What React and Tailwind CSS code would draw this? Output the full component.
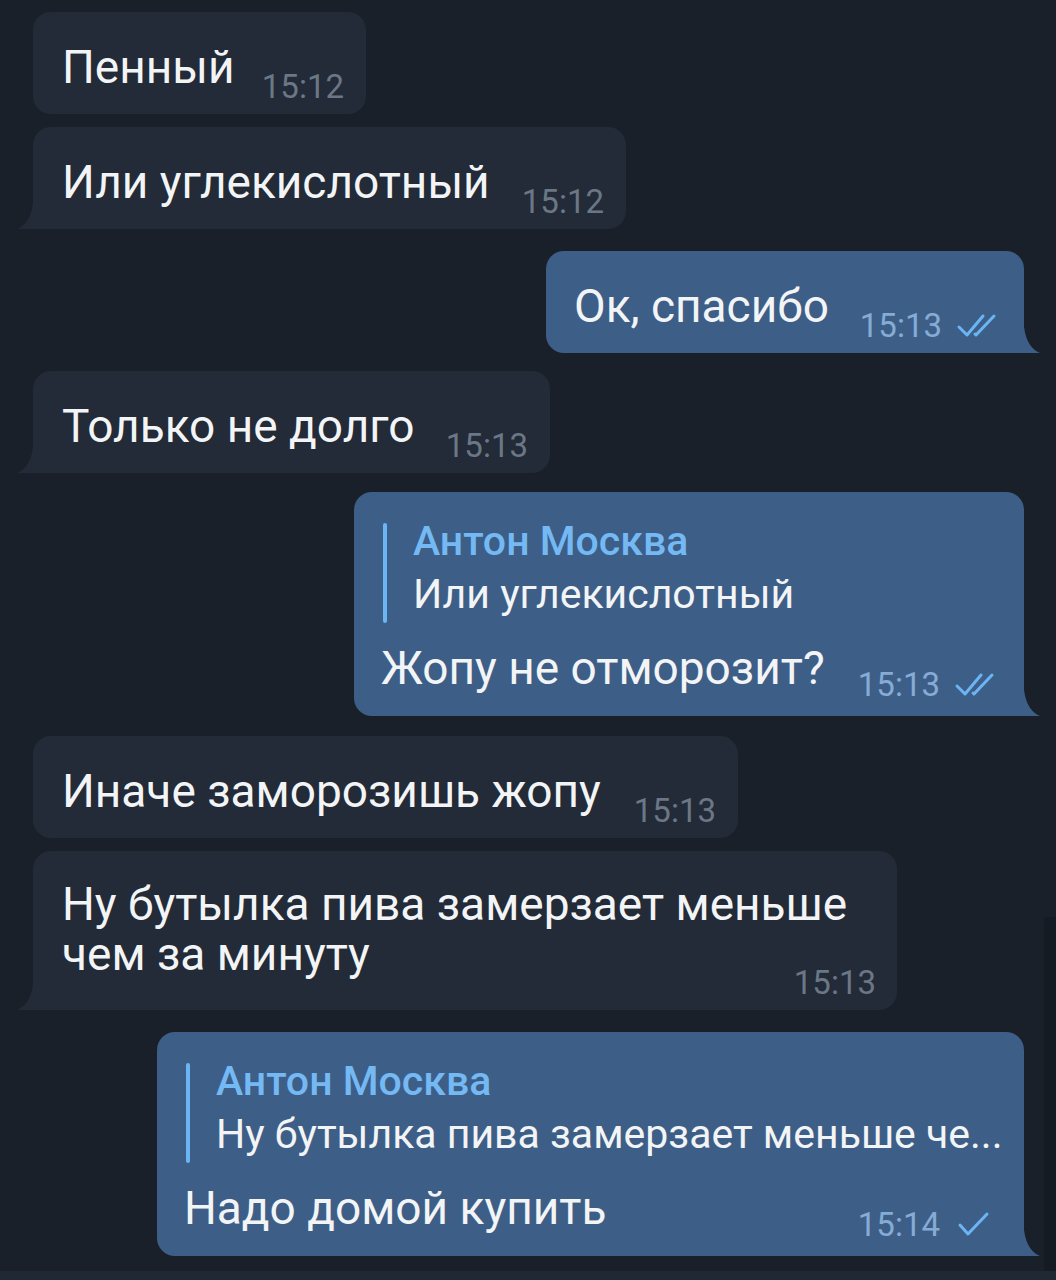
import React from 'react';

function TailIn({ color }) {
  return (
    <svg width="16" height="30" viewBox="0 0 16 30" className="shrink-0 block">
      <path d="M16 0 V30 H0 C7 27 14 20 16 4 Z" fill={color} />
    </svg>
  );
}

function TailOut({ color }) {
  return (
    <svg width="16" height="30" viewBox="0 0 16 30" className="shrink-0 block">
      <path d="M0 0 V30 H16 C9 27 2 20 0 4 Z" fill={color} />
    </svg>
  );
}

function Checks({ double }) {
  return (
    <svg width="46" height="28" viewBox="0 0 46 28" className="block" fill="none" stroke="#6cb5f5" strokeWidth="3" strokeLinecap="round" strokeLinejoin="round">
      {double ? (
        <>
          <path d="M3 15 L11 23 L27 4" />
          <path d="M19 22 L20 23 L38 4" />
        </>
      ) : (
        <path d="M6 14 L14 23 L33 3" />
      )}
    </svg>
  );
}

const IN = '#222b37';
const OUT = '#3d5f87';

function Incoming({ text, time, width, tail, mt }) {
  return (
    <div className={`flex items-end ${tail ? 'pl-[17px]' : 'pl-[33px]'} ${mt}`}>
      {tail && <TailIn color={IN} />}
      <div
        className={`flex items-end justify-between h-[102px] pl-[29px] pr-[22px] pb-[8px] bg-[#222b37] rounded-[18px] ${tail ? 'rounded-bl-none' : ''}`}
        style={{ width }}
      >
        <span className="text-[46px] leading-[50px] text-[#f3f4f6] mb-[14px] whitespace-nowrap">{text}</span>
        <span className="text-[33px] leading-[38px] text-[#6b7786]">{time}</span>
      </div>
    </div>
  );
}

function Outgoing({ text, time, width, mt }) {
  return (
    <div className={`flex items-end justify-end pr-[4px] ${mt}`}>
      <div
        className="flex items-end justify-between h-[102px] pl-[28px] pr-[22px] pb-[8px] bg-[#3d5f87] rounded-[18px] rounded-br-none"
        style={{ width }}
      >
        <span className="text-[46px] leading-[50px] text-[#f3f4f6] mb-[14px] whitespace-nowrap">{text}</span>
        <span className="flex items-end gap-[14px]">
          <span className="text-[33px] leading-[38px] text-[#86acd6]">{time}</span>
          <span className="mb-[5px]"><Checks double /></span>
        </span>
      </div>
      <TailOut color={OUT} />
    </div>
  );
}

function ReplyOut({ name, quote, text, time, width, double, mt }) {
  return (
    <div className={`flex items-end justify-end pr-[4px] ${mt}`}>
      <div
        className="flex flex-col h-[224px] pl-[27px] pr-[24px] pb-[12px] bg-[#3d5f87] rounded-[18px] rounded-br-none"
        style={{ width }}
      >
        <div className="flex pt-[25px] pl-[2px]">
          <div className="w-[4px] h-[100px] mt-[6px] bg-[#6cb5f5] rounded-[2px] shrink-0" />
          <div className="flex flex-col pl-[26px] gap-[5px]">
            <span className="text-[41px] leading-[48px] font-medium text-[#74b9f4] whitespace-nowrap">{name}</span>
            <span className="text-[41px] leading-[48px] text-[#f3f4f6] whitespace-nowrap">{quote}</span>
          </div>
        </div>
        <div className="flex items-end justify-between mt-auto">
          <span className="text-[46px] leading-[50px] text-[#f3f4f6] mb-[11px] whitespace-nowrap">{text}</span>
          <span className="flex items-end gap-[14px]">
            <span className="text-[33px] leading-[38px] text-[#86acd6]">{time}</span>
            <span className="mb-[5px]"><Checks double={double} /></span>
          </span>
        </div>
      </div>
      <TailOut color={OUT} />
    </div>
  );
}

export default function App() {
  return (
    <div className="w-[1056px] h-[1280px] overflow-hidden flex flex-col bg-[#1a2029] font-['Roboto','Noto_Sans',sans-serif]">
      <div className="flex h-[1271px]">
        <div className="flex-1 flex flex-col pt-[12px]">
          <Incoming text="Пенный" time="15:12" width={333} />
          <Incoming text="Или углекислотный" time="15:12" width={593} tail mt="mt-[13px]" />
          <Outgoing text="Ок, спасибо" time="15:13" width={478} mt="mt-[22px]" />
          <Incoming text="Только не долго" time="15:13" width={517} tail mt="mt-[18px]" />
          <ReplyOut
            name="Антон Москва"
            quote="Или углекислотный"
            text="Жопу не отморозит?"
            time="15:13"
            width={670}
            double
            mt="mt-[19px]"
          />
          <Incoming text="Иначе заморозишь жопу" time="15:13" width={705} mt="mt-[20px]" />

          <div className="flex items-end pl-[17px] mt-[13px]">
            <TailIn color={IN} />
            <div className="flex flex-col w-[864px] h-[159px] pl-[29px] pr-[21px] pb-[8px] bg-[#222b37] rounded-[18px] rounded-bl-none">
              <div className="pt-[28px] text-[46px] leading-[50px] text-[#f3f4f6]">
                Ну бутылка пива замерзает меньше
                <br />
                чем за минуту
              </div>
              <span className="self-end -mt-[15px] text-[33px] leading-[38px] text-[#6b7786]">15:13</span>
            </div>
          </div>

          <ReplyOut
            name="Антон Москва"
            quote="Ну бутылка пива замерзает меньше че..."
            text="Надо домой купить"
            time="15:14"
            width={867}
            mt="mt-[22px]"
          />
        </div>
        <div className="w-[12px] flex flex-col">
          <div className="h-[917px]" />
          <div className="flex-1 bg-[#151b22]" />
        </div>
      </div>
      <div className="flex-1 bg-[#202833]" />
    </div>
  );
}
